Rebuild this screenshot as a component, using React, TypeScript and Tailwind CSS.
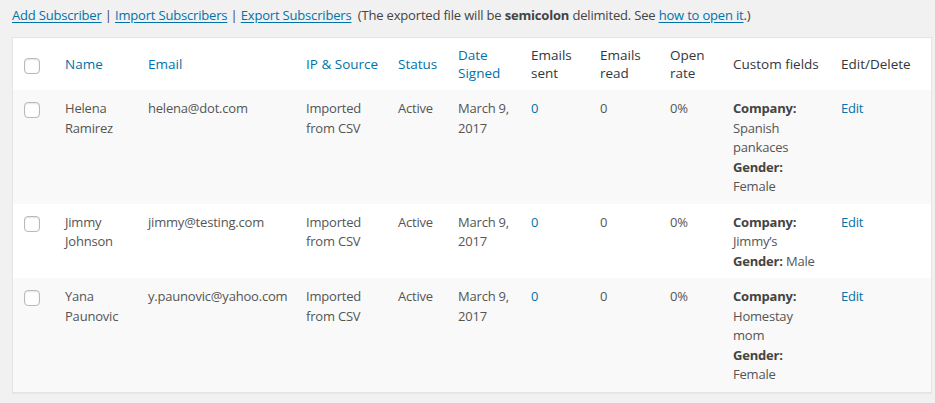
import React from "react"

interface Subscriber {
  first: string
  last: string
  email: string
  company: string
  gender: string
}

const subscribers: Subscriber[] = [
  { first: "Helena", last: "Ramirez", email: "helena@dot.com", company: "Spanish pankaces", gender: "Female" },
  { first: "Jimmy", last: "Johnson", email: "jimmy@testing.com", company: "Jimmy’s", gender: "Male" },
  { first: "Yana", last: "Paunovic", email: "y.paunovic@yahoo.com", company: "Homestay mom", gender: "Female" },
]

function Checkbox() {
  return (
    <span className="block w-4 h-4 rounded-[4px] border border-[#b4b9be] bg-white shadow-[inset_0_1px_2px_rgba(0,0,0,0.1)]" />
  )
}

const linkCls = "text-[#0073aa] underline underline-offset-2"
const sortCls = "text-[#0073aa]"

export default function App() {
  return (
    <div
      className="min-h-[403px] bg-[#f1f1f1] text-[13px] text-[#555] px-3 pt-[5px]"
      style={{ fontFamily: '"Open Sans", "Noto Sans", sans-serif' }}
    >
      <p className="leading-5 text-[#444] tracking-[-0.18px]">
        <a className={linkCls}>Add Subscriber</a> | <a className={linkCls}>Import Subscribers</a> |{" "}
        <a className={linkCls}>Export Subscribers</a>&nbsp; (The exported file will be <b>semicolon</b> delimited. See{" "}
        <a className={linkCls}>how to open it</a>.)
      </p>

      <div className="mt-3 w-[920px] border border-[#e5e5e5] bg-white shadow-[0_1px_1px_rgba(0,0,0,0.04)]">
        <table className="w-full table-fixed border-collapse">
          <thead>
            <tr className="text-left align-middle text-[13.5px] leading-[18px] text-[#32373c]">
              <th className="w-[42px] pl-[11px] pt-[4px] font-normal"><Checkbox /></th>
              <th className="w-[83px] px-2.5 py-2 font-normal"><span className={sortCls}>Name</span></th>
              <th className="w-[158px] px-2.5 py-2 font-normal"><span className={sortCls}>Email</span></th>
              <th className="w-[92px] pl-2.5 pr-0 py-2 font-normal whitespace-nowrap"><span className={sortCls}>IP &amp; Source</span></th>
              <th className="w-[60px] px-2.5 py-2 font-normal"><span className={sortCls}>Status</span></th>
              <th className="w-[73px] px-2.5 py-2 font-normal"><span className={sortCls}>Date Signed</span></th>
              <th className="w-[69px] px-2.5 py-2 font-normal">Emails sent</th>
              <th className="w-[70px] px-2.5 py-2 font-normal">Emails read</th>
              <th className="w-[63px] px-2.5 py-2 font-normal">Open rate</th>
              <th className="w-[108px] px-2.5 py-2 font-normal">Custom fields</th>
              <th className="px-2.5 py-2 font-normal">Edit/Delete</th>
            </tr>
          </thead>
          <tbody className="tracking-[-0.2px]">
            {subscribers.map((s, i) => (
              <tr key={s.email} className={`align-top leading-[19.5px] ${i % 2 === 0 ? "bg-[#f9f9f9]" : "bg-white"}`}>
                <td className="pl-[11px] pt-3"><Checkbox /></td>
                <td className="px-2.5 pt-[9px] pb-[7px]">{s.first}<br />{s.last}</td>
                <td className="px-2.5 pt-[9px] pb-[7px]">{s.email}</td>
                <td className="px-2.5 pt-[9px] pb-[7px]">Imported from CSV</td>
                <td className="px-2.5 pt-[9px] pb-[7px]">Active</td>
                <td className="px-2.5 pt-[9px] pb-[7px]">March 9, 2017</td>
                <td className="px-2.5 pt-[9px] pb-[7px] text-[#0073aa]">0</td>
                <td className="px-2.5 pt-[9px] pb-[7px]">0</td>
                <td className="px-2.5 pt-[9px] pb-[7px]">0%</td>
                <td className="px-2.5 pt-[9px] pb-[7px]">
                  <b className="text-[#444]">Company:</b><br />
                  {s.company}<br />
                  <b className="text-[#444]">Gender:</b> {s.gender}
                </td>
                <td className="px-2.5 pt-[9px] pb-[7px] text-[#0073aa]">Edit</td>
              </tr>
            ))}
          </tbody>
        </table>
      </div>
    </div>
  )
}
